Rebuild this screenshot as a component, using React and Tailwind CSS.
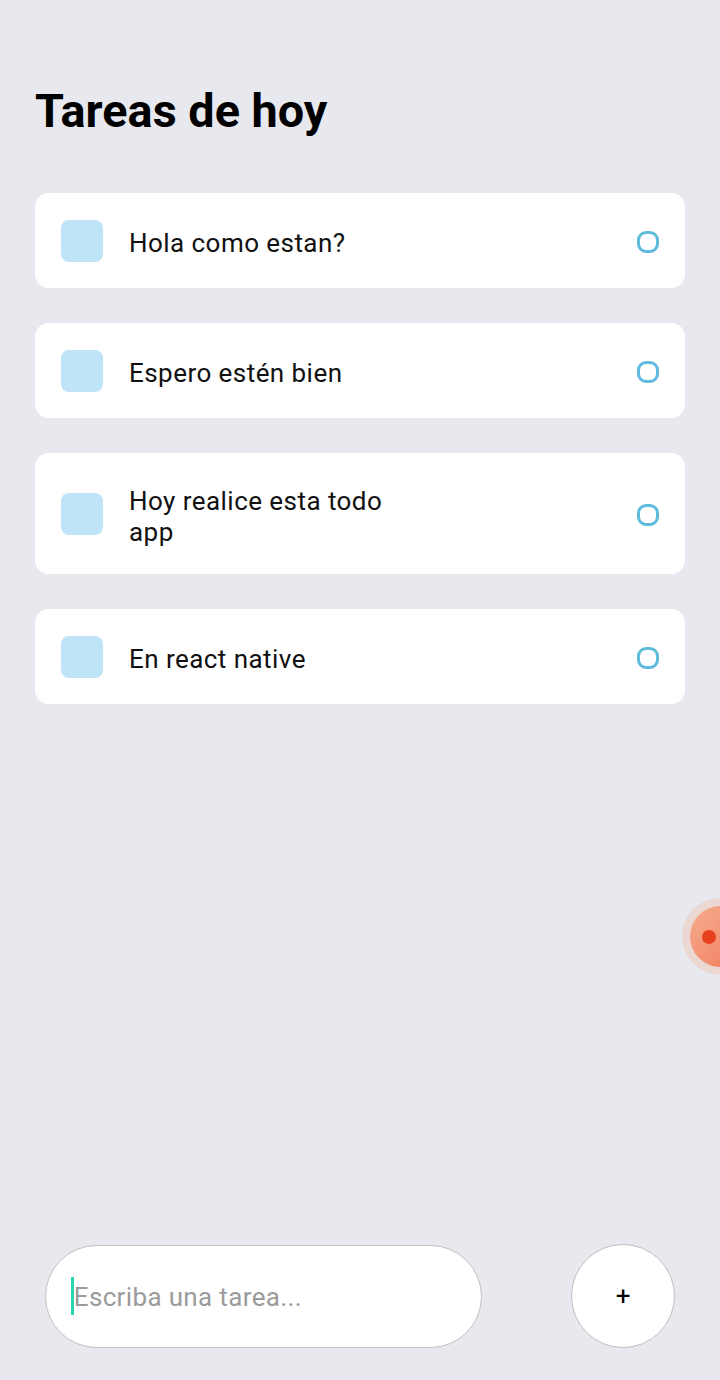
import React from "react";

const tasks = [
  "Hola como estan?",
  "Espero estén bien",
  "Hoy realice esta todo app",
  "En react native",
];

function Task({ text }) {
  return (
    <div className="flex items-center justify-between bg-white rounded-[14px] px-[26px] py-[26.5px]">
      <div className="flex items-center">
        <div className="w-[42px] h-[42px] shrink-0 rounded-[8px] bg-[#c0e4f7]" />
        <p className="ml-[26px] max-w-[290px] text-[26px] tracking-[0.45px] leading-[31px] pt-[6px] text-[#111]">
          {text}
        </p>
      </div>
      <div className="w-[22px] h-[22px] rounded-[9px] border-[3.5px] border-[#5fbbdc] mt-[2px]" />
    </div>
  );
}

export default function App() {
  return (
    <div
      className="relative flex flex-col h-[1380px] bg-[#e8e8ef] overflow-hidden"
      style={{ fontFamily: "Roboto, 'Noto Sans', sans-serif" }}
    >
      <div className="px-[35px] pt-[83px]">
        <h1 className="text-[46.8px] leading-[56px] font-bold text-black">Tareas de hoy</h1>
        <div className="mt-[54px] flex flex-col gap-[35px]">
          {tasks.map((t) => (
            <Task key={t} text={t} />
          ))}
        </div>
      </div>

      <div className="flex-1" />

      <div className="flex items-center justify-around pb-[32px]">
        <div className="w-[437px] h-[103px] rounded-full bg-white border border-[#c0c0c0] flex items-center pl-[25px]">
          <span className="w-[3px] h-[38px] bg-[#28d3b0]" />
          <span className="text-[26px] tracking-[0.35px] text-[#9b9b9b] pt-[3px]">Escriba una tarea...</span>
        </div>
        <div className="w-[104px] h-[104px] rounded-full bg-white border border-[#c0c0c0] flex items-center justify-center">
          <span className="text-[26px] leading-none text-black">+</span>
        </div>
      </div>

      <div className="absolute left-[682px] top-[898px] w-[77px] h-[77px] rounded-full bg-[#ecd8d3] flex items-center justify-center">
        <div className="w-[61px] h-[61px] rounded-full bg-gradient-to-br from-[#f6ad90] to-[#ef7a5a] flex items-center pl-[12px]">
          <div className="w-[14px] h-[14px] rounded-full bg-[#e6401f]" />
        </div>
      </div>
    </div>
  );
}
